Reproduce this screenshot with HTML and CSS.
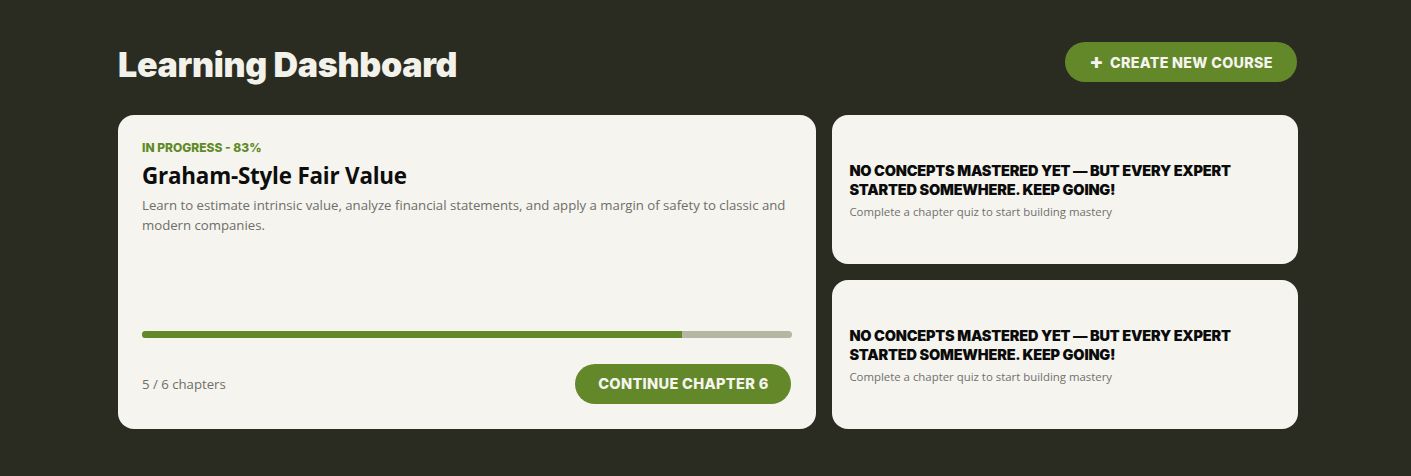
FILE: index.html
```html
<!DOCTYPE html>
<html>
<head>
<meta charset="utf-8">
<link rel="stylesheet" href="styles.css">
</head>
<body>
<div class="page">
  <header class="top">
    <h1 class="title">Learning Dashboard</h1>
    <button class="btn btn-create"><span class="plus">+</span> CREATE NEW COURSE</button>
  </header>
  <main class="grid">
    <section class="card main-card">
      <div class="status">IN PROGRESS - 83%</div>
      <h2 class="course-title">Graham-Style Fair Value</h2>
      <p class="desc">Learn to estimate intrinsic value, analyze financial statements, and apply a margin of safety to classic and modern companies.</p>
      <div class="spacer"></div>
      <div class="bar"><div class="fill" style="width:83%"></div></div>
      <div class="footer">
        <span class="chapters">5 / 6 chapters</span>
        <button class="btn btn-continue">CONTINUE CHAPTER 6</button>
      </div>
    </section>
    <div class="side">
      <section class="card side-card">
        <h3 class="side-title">No concepts mastered yet — but every expert started somewhere. Keep going!</h3>
        <p class="side-sub">Complete a chapter quiz to start building mastery</p>
      </section>
      <section class="card side-card">
        <h3 class="side-title">No concepts mastered yet — but every expert started somewhere. Keep going!</h3>
        <p class="side-sub">Complete a chapter quiz to start building mastery</p>
      </section>
    </div>
  </main>
</div>
</body>
</html>
```
FILE: styles.css
```css
* { box-sizing: border-box; }
html, body { margin: 0; padding: 0; }
body {
  background: #2a2c22;
  font-family: "Open Sans", "Noto Sans", sans-serif;
  color: #111;
}
.page {
  width: 1180px;
  margin-left: 118px;
  padding-top: 42px;
}
.top {
  display: flex;
  justify-content: space-between;
  align-items: center;
  height: 40px;
}
.title {
  margin: 0;
  font-family: "Inter", sans-serif;
  font-weight: 900;
  font-size: 34px;
  letter-spacing: -0.3px;
  color: #f3f2ea;
  line-height: 40px;
  padding-top: 6px;
}
.btn {
  border: none;
  background: #638829;
  color: #f5f4ee;
  font-family: "Inter", sans-serif;
  font-weight: 800;
  border-radius: 20px;
  height: 40px;
  cursor: pointer;
  letter-spacing: 0.3px;
  font-size: 14.3px;
}
.btn-create {
  width: 232px;
  display: flex;
  align-items: center;
  justify-content: center;
  gap: 6px;
  margin-right: 1px;
}
.plus { font-size: 21px; line-height: 1; margin-top: -2px; }
.grid {
  display: grid;
  grid-template-columns: 3fr 2fr;
  gap: 16px;
  margin-top: 33px;
}
.card {
  background: #f5f4ee;
  border-radius: 16px;
}
.main-card {
  height: 314px;
  padding: 24px 24px 25px;
  display: flex;
  flex-direction: column;
}
.status {
  font-family: "Inter", sans-serif;
  font-weight: 800;
  font-size: 12px;
  color: #5e8a26;
  letter-spacing: 0;
  line-height: 16px;
  margin-top: 1px;
}
.course-title {
  margin: 6px 0 0;
  font-family: "Open Sans", sans-serif;
  font-weight: 700;
  font-size: 22.4px;
  line-height: 28px;
  letter-spacing: -0.2px;
  color: #0d0d0d;
}
.desc {
  margin: 5px 0 0;
  font-size: 13.2px;
  line-height: 20px;
  color: #6e6e6a;
}
.spacer { flex: 1; }
.bar {
  height: 7px;
  border-radius: 4px;
  background: #b4b7a2;
  overflow: hidden;
}
.fill { height: 100%; background: #638829; }
.footer {
  display: flex;
  justify-content: space-between;
  align-items: center;
  margin-top: 26px;
}
.chapters {
  font-size: 13.2px;
  color: #6e6e6a;
}
.btn-continue {
  width: 216px;
  font-size: 14.6px;
  margin-right: 1px;
}
.side {
  display: flex;
  flex-direction: column;
  gap: 16px;
}
.side-card {
  height: 149px;
  padding: 0 17px;
  display: flex;
  flex-direction: column;
  justify-content: center;
}
.side-title {
  margin: 0;
  font-family: "Inter", sans-serif;
  font-weight: 900;
  font-size: 14.5px;
  line-height: 19px;
  text-transform: uppercase;
  letter-spacing: -0.2px;
  color: #0b0b0b;
  max-width: 400px;
}
.side-sub {
  margin: 5px 0 0;
  font-size: 11.4px;
  line-height: 15px;
  color: #707070;
}
```
